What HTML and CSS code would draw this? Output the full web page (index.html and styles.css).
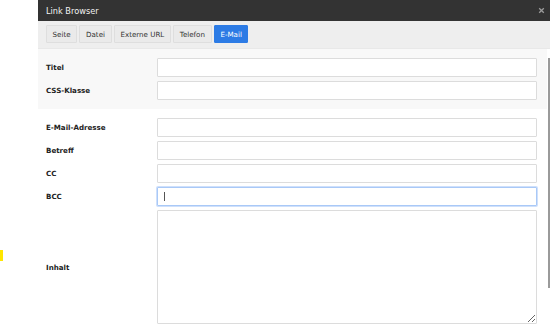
FILE: index.html
```html
<!DOCTYPE html>
<html lang="de">
<head>
<meta charset="utf-8">
<title>Link Browser</title>
<link rel="stylesheet" href="styles.css">
</head>
<body>
<div class="page">
  <span class="marker"></span>
  <div class="modal">
    <div class="header">
      <span class="title">Link Browser</span>
      <svg class="close" width="7" height="7" viewBox="0 0 7 7"><path d="M1.2 1.2L5.8 5.8M5.8 1.2L1.2 5.8" stroke="#9c9c9c" stroke-width="1.3" fill="none"/></svg>
    </div>
    <div class="tabs">
      <span class="tab">Seite</span>
      <span class="tab">Datei</span>
      <span class="tab">Externe URL</span>
      <span class="tab">Telefon</span>
      <span class="tab active">E-Mail</span>
    </div>
    <div class="body">
      <div class="content">
        <div class="section alt">
          <label class="lbl">Titel</label><input class="field" type="text">
          <label class="lbl">CSS-Klasse</label><input class="field" type="text">
        </div>
        <div class="section">
          <label class="lbl">E-Mail-Adresse</label><input class="field" type="text">
          <label class="lbl">Betreff</label><input class="field" type="text">
          <label class="lbl">CC</label><input class="field" type="text">
          <label class="lbl">BCC</label>
          <div class="focus-wrap"><input class="field focused" type="text"><span class="caret"></span></div>
          <label class="lbl">Inhalt</label><textarea class="field area"></textarea>
        </div>
      </div>
      <div class="scroll"><span class="thumb"></span></div>
    </div>
  </div>
</div>
</body>
</html>
```
FILE: styles.css
```css
html, body {
  margin: 0;
  padding: 0;
  background: #ffffff;
  font-family: "DejaVu Sans", Verdana, sans-serif;
  overflow: hidden;
}
.page {
  position: relative;
  width: 550px;
  height: 326px;
  padding-left: 38px;
  box-sizing: border-box;
}
.marker {
  position: absolute;
  left: 0;
  top: 250px;
  width: 3px;
  height: 11px;
  background: #ffe600;
}
.modal {
  width: 512px;
}
.header {
  height: 21px;
  background: #333333;
  display: flex;
  align-items: center;
  justify-content: space-between;
  padding: 0 5px 0 8px;
}
.title {
  color: #f2f2f2;
  font-size: 8.2px;
}
.close {
  display: block;
  margin-top: -1px;
}
.tabs {
  background: #eeeeee;
  display: flex;
  gap: 2.3px;
  padding: 4px 8px 5px;
  border-bottom: 1px solid #e8e8e8;
}
.tab {
  height: 18px;
  box-sizing: border-box;
  display: flex;
  align-items: center;
  padding: 0 5.6px;
  background: #eaeaea;
  border: 1px solid #dedede;
  border-radius: 1px;
  color: #333333;
  font-size: 7.1px;
}
.tab.active {
  background: #2c7be5;
  border-color: #2c7be5;
  color: #ffffff;
}
.body {
  display: flex;
}
.content {
  width: 509px;
}
.scroll {
  flex: 1;
  position: relative;
  background: #ffffff;
}
.thumb {
  position: absolute;
  left: 1px;
  top: 9px;
  width: 2px;
  height: 230px;
  background: #9a9a9a;
}
.section {
  display: grid;
  grid-template-columns: 111px 380px;
  row-gap: 4px;
  align-items: center;
  padding: 9px 10px 9px 8px;
}
.section.alt {
  background: #f8f8f8;
  padding-bottom: 9px;
}
.lbl {
  font-size: 7.1px;
  font-weight: bold;
  color: #222222;
}
.field {
  display: block;
  width: 380px;
  height: 19px;
  box-sizing: border-box;
  margin: 0;
  border: 1px solid #dcdcdc;
  border-radius: 1px;
  background: #ffffff;
  outline: none;
  padding: 0 6px;
  font: inherit;
}
.focus-wrap {
  position: relative;
}
.field.focused {
  border-color: #a9c9f7;
  box-shadow: 0 0 0 1px #cfe0fb;
}
.caret {
  position: absolute;
  left: 7px;
  top: 5px;
  width: 1px;
  height: 9px;
  background: #555555;
}
.area {
  height: 114px;
  resize: vertical;
  padding: 4px 6px;
}
```
